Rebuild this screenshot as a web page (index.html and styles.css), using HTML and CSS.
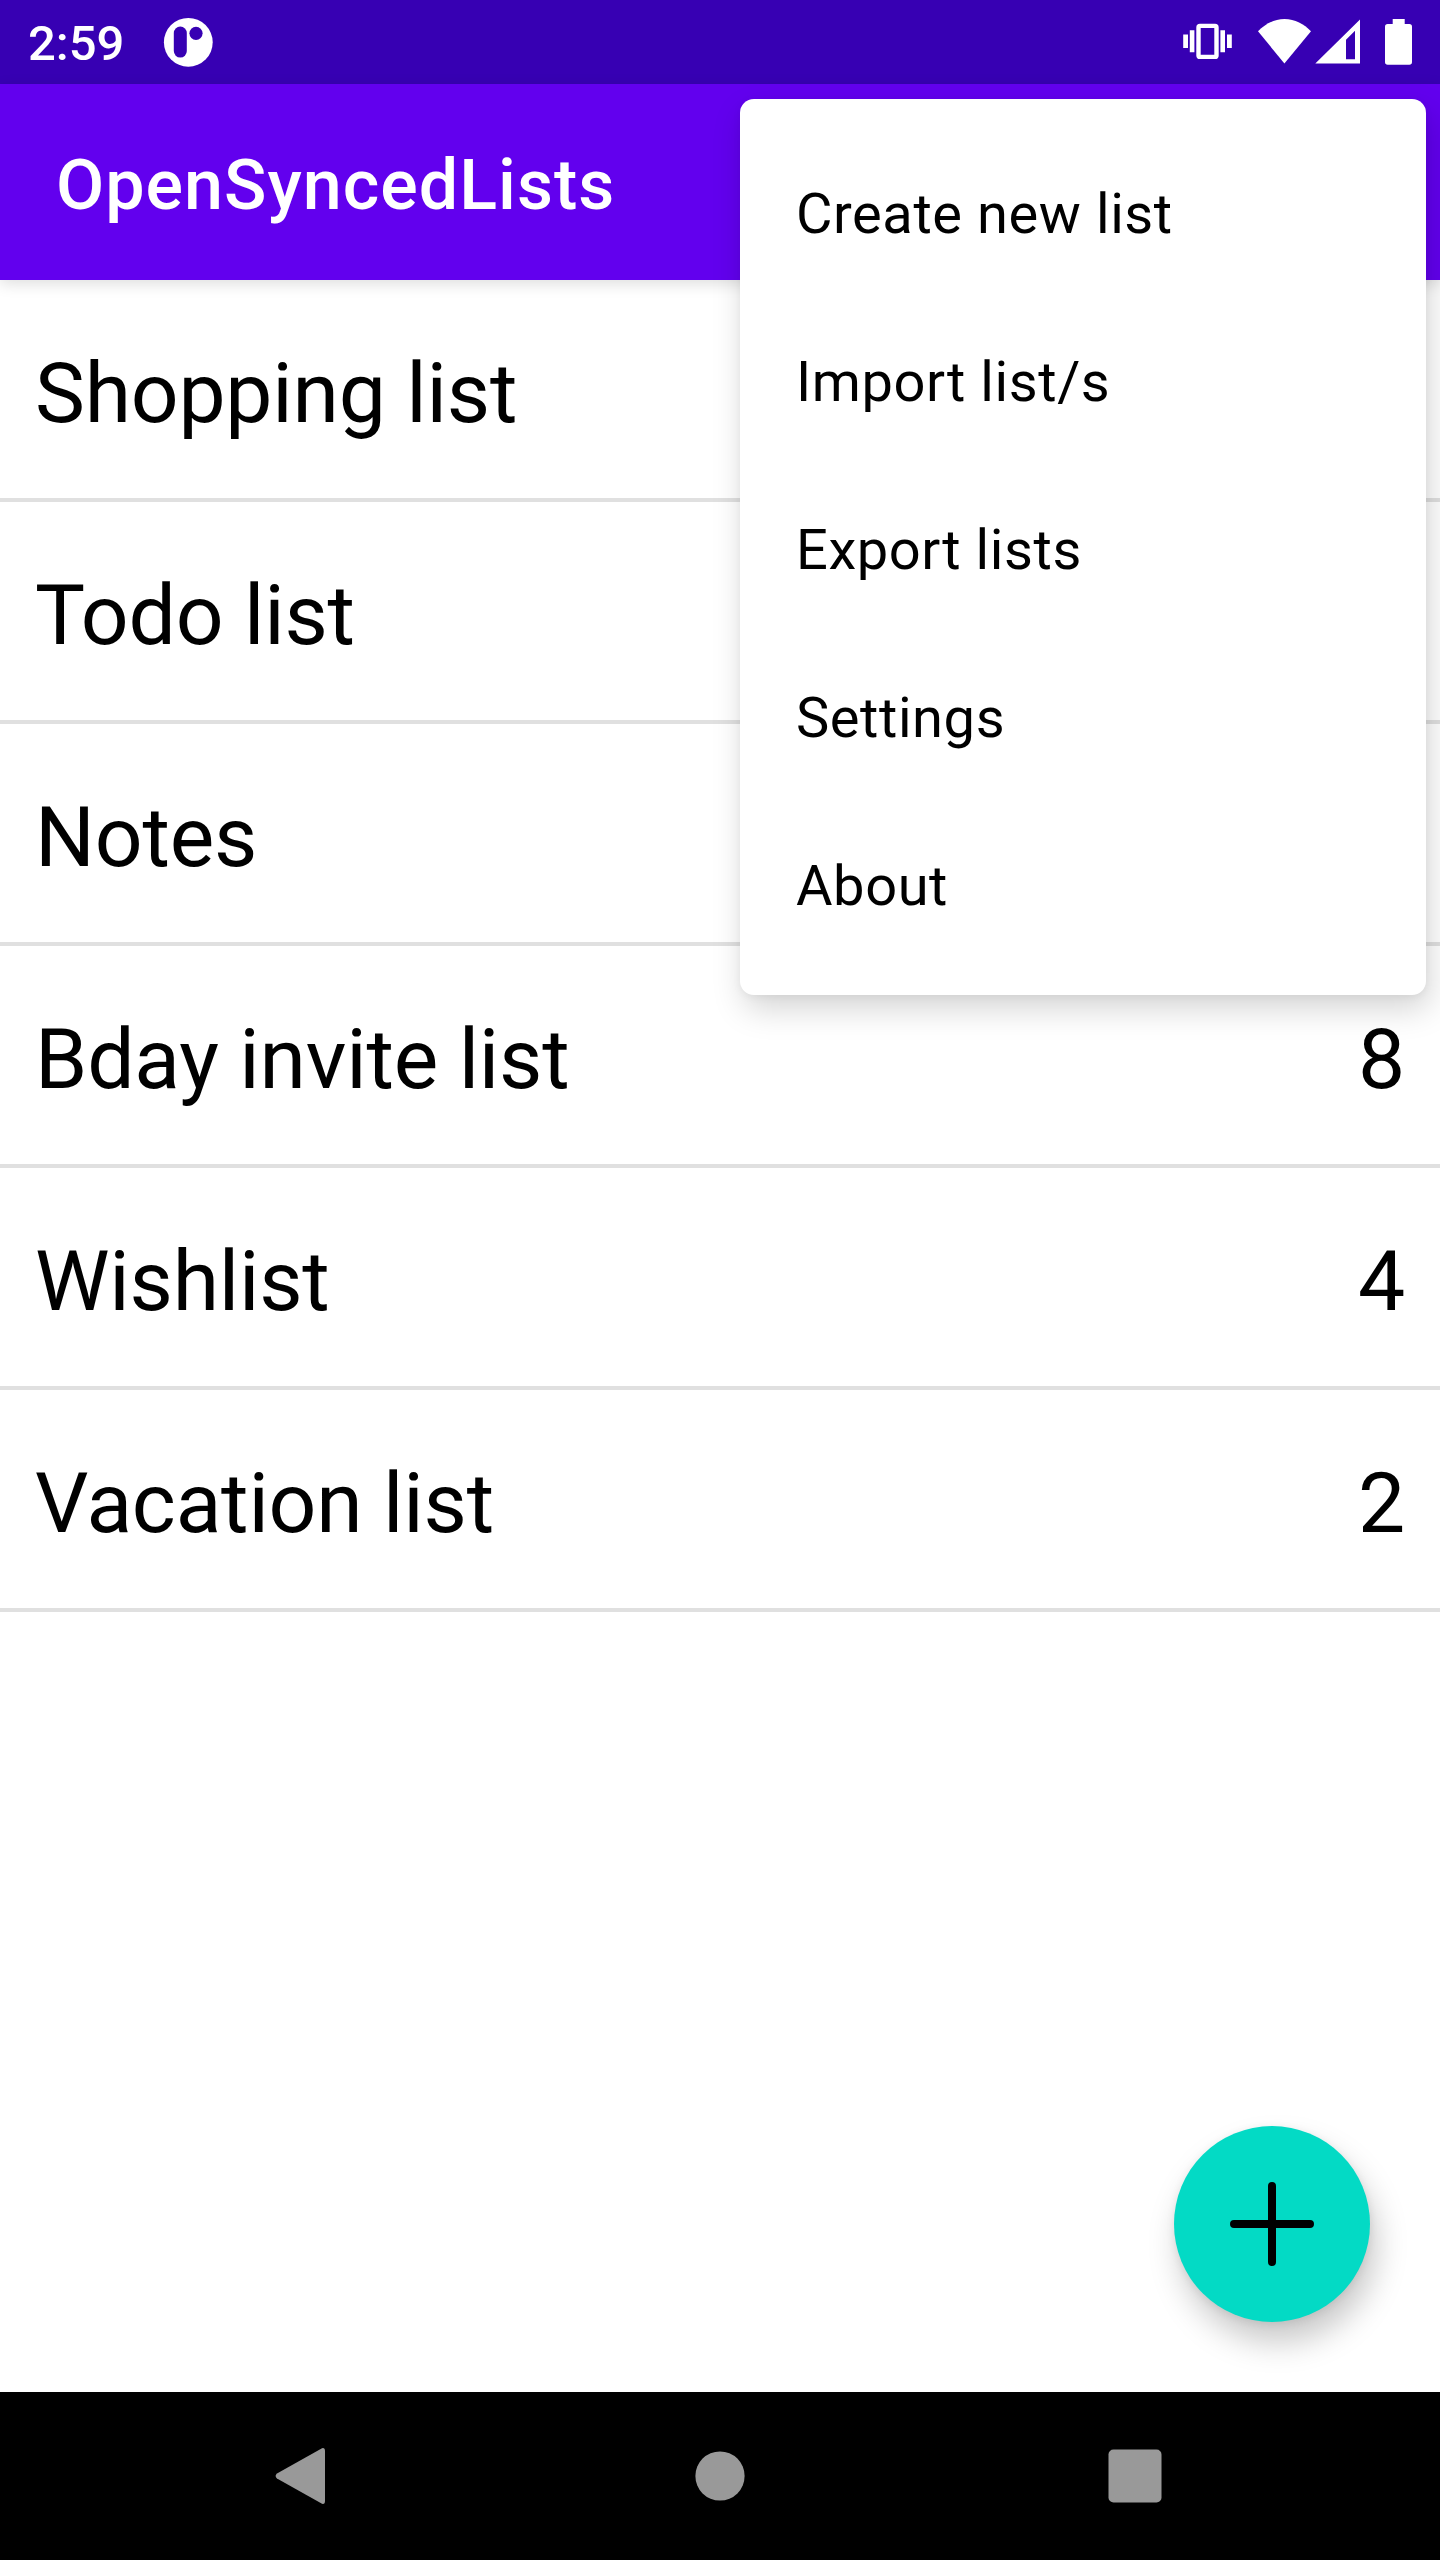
FILE: index.html
```html
<!DOCTYPE html>
<html lang="en">
<head>
<meta charset="utf-8">
<title>OpenSyncedLists</title>
<link rel="stylesheet" href="styles.css">
</head>
<body>
<div class="screen">
  <div class="status-bar">
    <span class="clock">2:59</span>
    <svg class="notification" width="50" height="50" viewBox="0 0 50 50">
      <circle cx="25.300" cy="25.300" r="24.4" fill="#fff"/>
      <rect x="10.8" y="9.6" width="13" height="31" rx="6.5" fill="#3700b3"/>
      <circle cx="33" cy="16.300" r="6.6" fill="#3700b3"/>
    </svg>
    <div class="system-icons">
      <svg width="49" height="84" viewBox="1183 0 49 84" fill="#fff">
        <path d="M1183.2 34.4h4.8V48h-4.8zM1189.8 30.2h4.6v22.1h-4.6zM1220.4 30.2h4.6v22.1h-4.6zM1227 34.4h4.8V48h-4.8z"/>
        <rect x="1198.5" y="25.9" width="18" height="31" rx="1.5" fill="none" stroke="#fff" stroke-width="4.4"/>
      </svg>
      <svg class="wifi" width="53" height="84" viewBox="1258 0 53 84" fill="#fff">
        <path d="M1284.4 63.4 1258 31.3C1265 24 1274 19 1284.5 19S1304 24 1311 31.3z"/>
      </svg>
      <svg class="signal" width="45" height="84" viewBox="1315 0 45 84" fill="#fff">
        <path fill-rule="evenodd" d="M1315.3 63.6 1360 19.5V63.6zM1346 39.7V59.2H1355V30.7z"/>
      </svg>
      <svg class="battery" width="27" height="84" viewBox="1385 0 27 84" fill="#fff">
        <path d="M1392.7 24V19h12v5H1409.3a2.7 2.7 0 0 1 2.7 2.7V62a2.7 2.7 0 0 1-2.7 2.7H1387.7A2.7 2.7 0 0 1 1385 62V26.7A2.7 2.7 0 0 1 1387.7 24z"/>
      </svg>
    </div>
  </div>
  <header class="app-bar"><h1 class="title">OpenSyncedLists</h1></header>
  <main class="content">
    <ul class="lists">
      <li class="row"><span>Shopping list</span></li>
      <li class="row"><span>Todo list</span></li>
      <li class="row"><span>Notes</span></li>
      <li class="row"><span>Bday invite list</span><span>8</span></li>
      <li class="row"><span>Wishlist</span><span>4</span></li>
      <li class="row"><span>Vacation list</span><span>2</span></li>
    </ul>
    <button class="fab" aria-label="Add list">
      <svg width="84" height="84" viewBox="0 0 84 84" stroke="#000" stroke-width="8" stroke-linecap="round">
        <path d="M42 4v76M4 42h76"/>
      </svg>
    </button>
  </main>
  <nav class="nav-bar">
    <svg width="168" height="168" viewBox="216 0 168 168" fill="#999">
      <path d="M322 56.2 277 81.5Q274.2 84 277 86.5L322 111.8Q325 112.5 325 109V59Q325 55.5 322 56.2z"/>
    </svg>
    <svg width="168" height="168" viewBox="633 0 168 168" fill="#999">
      <circle cx="720" cy="84" r="24.6"/>
    </svg>
    <svg width="168" height="168" viewBox="1050 0 168 168" fill="#999">
      <rect x="1108.5" y="57.5" width="53" height="53" rx="5"/>
    </svg>
  </nav>
  <div class="menu">
    <div class="menu-item">Create new list</div>
    <div class="menu-item">Import list/s</div>
    <div class="menu-item">Export lists</div>
    <div class="menu-item">Settings</div>
    <div class="menu-item">About</div>
  </div>
</div>
</body>
</html>
```
FILE: styles.css
```css
* { box-sizing: border-box; }
body {
  margin: 0;
  background: #fff;
  color: #000;
  font-family: Roboto, "Liberation Sans", sans-serif;
}
svg { display: block; }
.screen {
  position: relative;
  display: flex;
  flex-direction: column;
  width: 1440px;
  height: 2560px;
  overflow: hidden;
}
.status-bar {
  display: flex;
  align-items: center;
  height: 84px;
  padding: 0 28px;
  background: #3700b3;
  color: #fff;
}
.clock {
  width: 100px;
  padding-top: 4px;
  font-size: 49px;
  font-weight: 500;
  line-height: 60px;
}
.notification { margin-left: 35px; }
.system-icons { display: flex; margin-left: auto; }
.wifi { margin-left: 26px; }
.signal { margin-left: 4px; }
.battery { margin-left: 25px; }
.app-bar {
  position: relative;
  z-index: 1;
  display: flex;
  align-items: center;
  height: 196px;
  padding: 6px 56px 0;
  background: #6200ee;
  box-shadow: 0 4px 14px rgba(0, 0, 0, .13);
}
.title {
  margin: 0;
  color: #fff;
  font-size: 70px;
  font-weight: 500;
  line-height: 94px;
  letter-spacing: .0145em;
}
.content { position: relative; flex: 1; }
.lists { margin: 0; padding: 0; list-style: none; }
.row {
  display: flex;
  justify-content: space-between;
  align-items: center;
  height: 222px;
  padding: 9px 35px 0;
  border-bottom: 4px solid #e0e0e0;
  font-size: 84px;
  line-height: 112px;
  letter-spacing: -.0025em;
}
.fab {
  position: absolute;
  right: 70px;
  bottom: 70px;
  display: grid;
  place-items: center;
  width: 196px;
  height: 196px;
  padding: 0;
  border: 0;
  border-radius: 50%;
  background: #03dac5;
  box-shadow: 6px 20px 32px rgba(0, 0, 0, .22), 0 2px 8px rgba(0, 0, 0, .08);
}
.nav-bar {
  position: relative;
  z-index: 1;
  display: flex;
  justify-content: space-between;
  height: 168px;
  padding: 0 222px 0 216px;
  background: #000;
}
.menu {
  position: absolute;
  z-index: 2;
  top: 99px;
  right: 14px;
  width: 686px;
  padding: 28px 0;
  border-radius: 14px;
  background: #fff;
  box-shadow: 4px 14px 32px rgba(0, 0, 0, .17), 0 2px 8px rgba(0, 0, 0, .05);
}
.menu-item {
  height: 168px;
  padding: 5px 56px 0;
  font-size: 56px;
  line-height: 164px;
  letter-spacing: .0104em;
}
```
